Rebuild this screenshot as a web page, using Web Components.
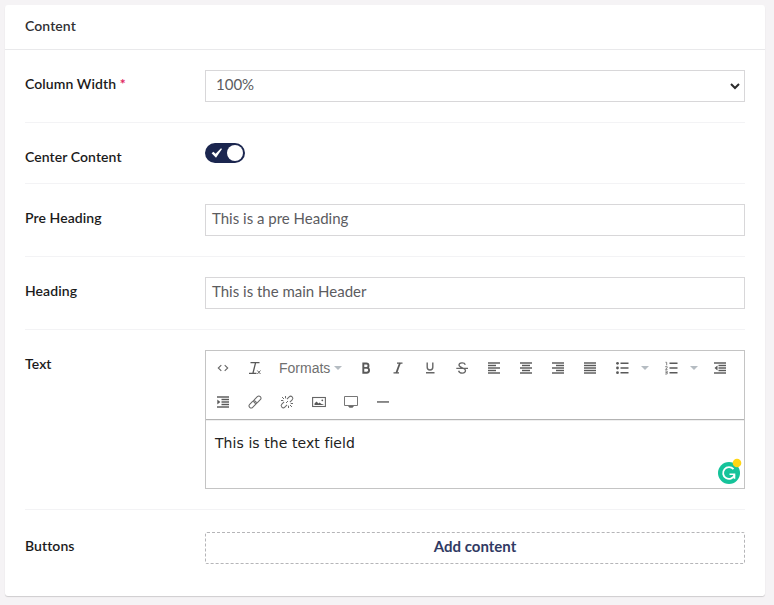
<!DOCTYPE html>
<html lang="en">
<head>
<meta charset="utf-8">
<title>Content</title>
<style>
body { margin: 0; padding: 5px 9px 9px 5px; background: #f5f3f5; font-family: Lato, "Liberation Sans", sans-serif; color: #1b1b1b; }
</style>
</head>
<body>
<content-panel heading="Content">
  <property-row label="Column Width" required><select-field>100%</select-field></property-row>
  <property-row label="Center Content" offset><toggle-switch></toggle-switch></property-row>
  <property-row label="Pre Heading"><text-field>This is a pre Heading</text-field></property-row>
  <property-row label="Heading"><text-field>This is the main Header</text-field></property-row>
  <property-row label="Text"><rich-editor>This is the text field</rich-editor></property-row>
  <property-row label="Buttons" last><add-button>Add content</add-button></property-row>
</content-panel>
<script>
class Base extends HTMLElement {
  constructor() {
    super();
    this.attachShadow({ mode: 'open' }).innerHTML = this.view();
  }
}

customElements.define('content-panel', class extends Base {
  view() {
    return `<style>
      :host { display: block; box-sizing: border-box; height: 591px; background: #fff; border-radius: 3px; box-shadow: 0 1px 1px 0 rgba(0,0,0,.16); }
      header { box-sizing: border-box; height: 45px; padding: 0 20px; border-bottom: 1px solid #e9e9eb; font-size: 14px; line-height: 41px; letter-spacing: .08px; font-weight: 600; color: #303033; }
      main { display: flex; flex-direction: column; padding: 0 20px; }
    </style><header>${this.getAttribute('heading')}</header><main><slot></slot></main>`;
  }
});

customElements.define('property-row', class extends Base {
  view() {
    return `<style>
      :host { display: flex; padding: 20px 0; border-bottom: 1px solid #f3f3f5; }
      :host([last]) { border-bottom: 0; padding-top: 22px; }
      .label { flex: 0 0 180px; padding-top: 4px; font-size: 14px; line-height: 19px; letter-spacing: .08px; font-weight: 600; color: #1b1b1b; }
      .field { flex: 1; min-width: 0; }
      :host([offset]) { height: 20px; }
      b { color: #e0245e; font-weight: 700; }
    </style><div class="label">${this.getAttribute('label')}${this.hasAttribute('required') ? ' <b>*</b>' : ''}</div><div class="field"><slot></slot></div>`;
  }
});

const box = 'display: flex; box-sizing: border-box; height: 32px; border: 1px solid #d8d7d9; font-size: 15px; color: #5c5c5f;';

customElements.define('text-field', class extends Base {
  view() {
    return `<style>:host { ${box} line-height: 26px; padding: 0 6px; }</style><slot></slot>`;
  }
});

customElements.define('select-field', class extends Base {
  view() {
    return `<style>
      :host { ${box} line-height: 26px; padding: 0 4px 0 10px; justify-content: space-between; }
      svg { display: block; margin-top: 11px; }
    </style><span><slot></slot></span><svg width="10" height="8" viewBox="0 0 10 8"><path d="M1 2l4 4 4-4" fill="none" stroke="#2b2b2b" stroke-width="2"/></svg>`;
  }
});

customElements.define('toggle-switch', class extends Base {
  view() {
    return `<style>
      :host { display: flex; box-sizing: border-box; width: 40px; height: 20px; padding: 2px; border-radius: 10px; background: #1b264f; align-items: center; justify-content: space-between; }
      i { width: 16px; height: 16px; border-radius: 50%; background: #fff; }
      svg { display: block; margin-left: 4px; }
    </style><svg width="12" height="12" viewBox="0 0 12 12"><path d="M.6 6.2L2.4 4.7l2.2 2.1L10 1.2l1 .8-6 8.800z" fill="#fff"/></svg><i></i>`;
  }
});

customElements.define('add-button', class extends Base {
  view() {
    return `<style>
      :host { display: flex; box-sizing: border-box; height: 32px; justify-content: center; border: 1px dashed #b5b5b8; border-radius: 2px; font-size: 15px; line-height: 27px; font-weight: 700; color: #303a63; }
    </style><slot></slot>`;
  }
});

const bars = (...l) => '<g stroke="#595959" stroke-width="1.450">' + l.map(([x, w], i) => `<path d="M${x} ${3 + i * 2.5}h${w}"/>`).join('') + '</g>';
const F = [2, 12];
const ICONS = {
  code: '<path d="M6.300 5.200L3.300 8l3 2.800M9.700 5.200l3 2.800-3 2.800" fill="none" stroke="#666" stroke-width="1.100"/>',
  clear: '<path d="M3.500 2.700h9M2 13.300h7.500M8.600 2.700L6 13" fill="none" stroke="#595959" stroke-width="1.300"/><path d="M10.300 10.500l3.200 3.500M13.500 10.500L10.300 14" stroke="#666"/>',
  bold: '<path d="M5.300 3.500h3a2.200 2.200 0 0 1 0 4.400h-3zM5.300 7.900h3.400a2.400 2.400 0 0 1 0 4.800H5.300z" fill="none" stroke="#595959" stroke-width="1.900"/>',
  italic: '<path d="M7 3.100h5.500M3.500 12.900H9" fill="none" stroke="#595959" stroke-width="1.100"/><path d="M10 3L6.300 13" stroke="#595959" stroke-width="1.800"/>',
  underline: '<path d="M5.200 2.500v4.700a2.800 2.800 0 0 0 5.600 0V2.500M4 12.700h8.500" fill="none" stroke="#666" stroke-width="1.400"/>',
  strike: '<path d="M11.300 4.700C10.500 2 5 2.200 5 5c0 3 6.500 2.600 6.500 5.500 0 3.300-6 3.400-6.900.2M2.300 8.300h11.700" fill="none" stroke="#666" stroke-width="1.300"/>',
  left: bars(F, [2, 8], F, [2, 8], F),
  center: bars(F, [4, 8], F, [4, 8], F),
  right: bars(F, [6, 8], F, [6, 8], F),
  full: bars(F, F, F, F, F),
  bullet: '<g fill="#595959"><circle cx="3.500" cy="3.300" r="1.400"/><circle cx="3.500" cy="8" r="1.400"/><circle cx="3.500" cy="12.700" r="1.400"/><path d="M6.500 2.500h8v1.500h-8zM6.500 7.300h8v1.500h-8zM6.500 12h8v1.500h-8z"/></g>',
  number: '<path d="M6.500 2.500h8v1.500h-8zM6.500 7.300h8v1.500h-8zM6.500 12h8v1.500h-8z" fill="#595959"/><path d="M2.500 2.300h1.200v3M2.200 6.700h2v1l-1.700 1.700h2M2.200 11h2v3h-2M2.500 12.500h1.500" fill="none" stroke="#777" stroke-width=".9"/>',
  outdent: bars(F, [6.500, 7.500], [6.500, 7.500], [6.500, 7.500], F) + '<path d="M5.500 5.500v5L2.500 8z" fill="#595959"/>',
  indent: bars(F, [6.500, 7.500], [6.500, 7.500], [6.500, 7.500], F) + '<path d="M2.300 5.500v5L5.300 8z" fill="#595959"/>',
  link: '<g fill="none" stroke="#666" transform="rotate(-45 8 8)"><rect x="0.500" y="5.900" width="8.300" height="4.200" rx="2.100"/><rect x="7.200" y="5.900" width="8.300" height="4.200" rx="2.100"/></g>',
  unlink: '<g fill="none" stroke="#6b6b6b"><g transform="rotate(-45 8 8)"><path d="M6 5.900H2.800a2.100 2.100 0 0 0 0 4.200H6M10 5.900h3.200a2.100 2.100 0 0 1 0 4.200H10"/></g><path d="M3 3l2 2M6.500 2v2.300M2 6.500h2.300M13 13l-2-2M9.500 14v-2.300M14 9.500h-2.300M7 9l2-2"/></g>',
  image: '<rect x="1.600" y="3.500" width="12.800" height="9" fill="none" stroke="#666" stroke-width="1.100"/><path d="M3.500 11V9.500l2-2 2 2 1-1 2 1.500 2 .5v.5z" fill="#595959"/><circle cx="11.300" cy="6.300" r=".9" fill="#595959"/>',
  media: '<path d="M1.500 2.500h13v9h-13z" fill="none" stroke="#777"/><path d="M5 12h6l-1.500 1.800h-3z" fill="#666"/>',
  rule: '<path d="M2 7.200h12v1.500H2z" fill="#666"/>'
};

customElements.define('tool-icon', class extends Base {
  view() {
    return `<style>:host { display: flex; flex: 0 0 32px; justify-content: center; } svg { display: block; }</style>
      <svg width="16" height="16" viewBox="0 0 16 16">${ICONS[this.getAttribute('name')]}</svg>`;
  }
});

customElements.define('rich-editor', class extends Base {
  view() {
    const t = n => `<tool-icon name="${n}"></tool-icon>`;
    const caret = '<i></i>';
    return `<style>
      :host { display: block; position: relative; box-sizing: border-box; height: 139px; border: 1px solid #c4c4c4; }
      .bar { display: flex; flex-direction: column; padding-left: 1px; height: 68px; border-bottom: 1px solid #b3b3b3; }
      .line { display: flex; align-items: center; height: 34px; }
      .formats { display: flex; align-items: center; box-sizing: border-box; width: 79px; padding-left: 8px; gap: 4px; font: 14px/20px "Liberation Sans", sans-serif; color: #707070; }
      i { width: 0; border: 4px solid transparent; border-top-color: #b5bcc2; border-bottom: 0; }
      .split { display: flex; align-items: center; width: 49px; gap: 3px; }
      .body { border-top: 1px solid #efefef; padding: 14px 9px; font: 14px/17px "DejaVu Sans", sans-serif; letter-spacing: .07px; color: #222; }
      .badge { position: absolute; right: 2px; bottom: 3px; }
    </style>
    <div class="bar">
      <div class="line">${t('code')}${t('clear')}<div class="formats"><span>Formats</span>${caret}</div>${['bold', 'italic', 'underline', 'strike', 'left', 'center', 'right', 'full'].map(t).join('')}<div class="split">${t('bullet')}${caret}</div><div class="split">${t('number')}${caret}</div>${t('outdent')}</div>
      <div class="line">${['indent', 'link', 'unlink', 'image', 'media', 'rule'].map(t).join('')}</div>
    </div>
    <div class="body"><slot></slot></div>
    <svg class="badge" width="26" height="27" viewBox="0 0 26 27">
      <circle cx="13" cy="15" r="11" fill="#15c39a"/>
      <path d="M17.500 11.200A5.900 5.900 0 1 0 18.500 17.200" fill="none" stroke="#fff" stroke-width="1.800"/>
      <path d="M13.500 16.300h5v4.500" fill="none" stroke="#fff" stroke-width="1.600"/>
      <circle cx="21" cy="5" r="4.300" fill="#ffd614"/>
    </svg>`;
  }
});
</script>
</body>
</html>
